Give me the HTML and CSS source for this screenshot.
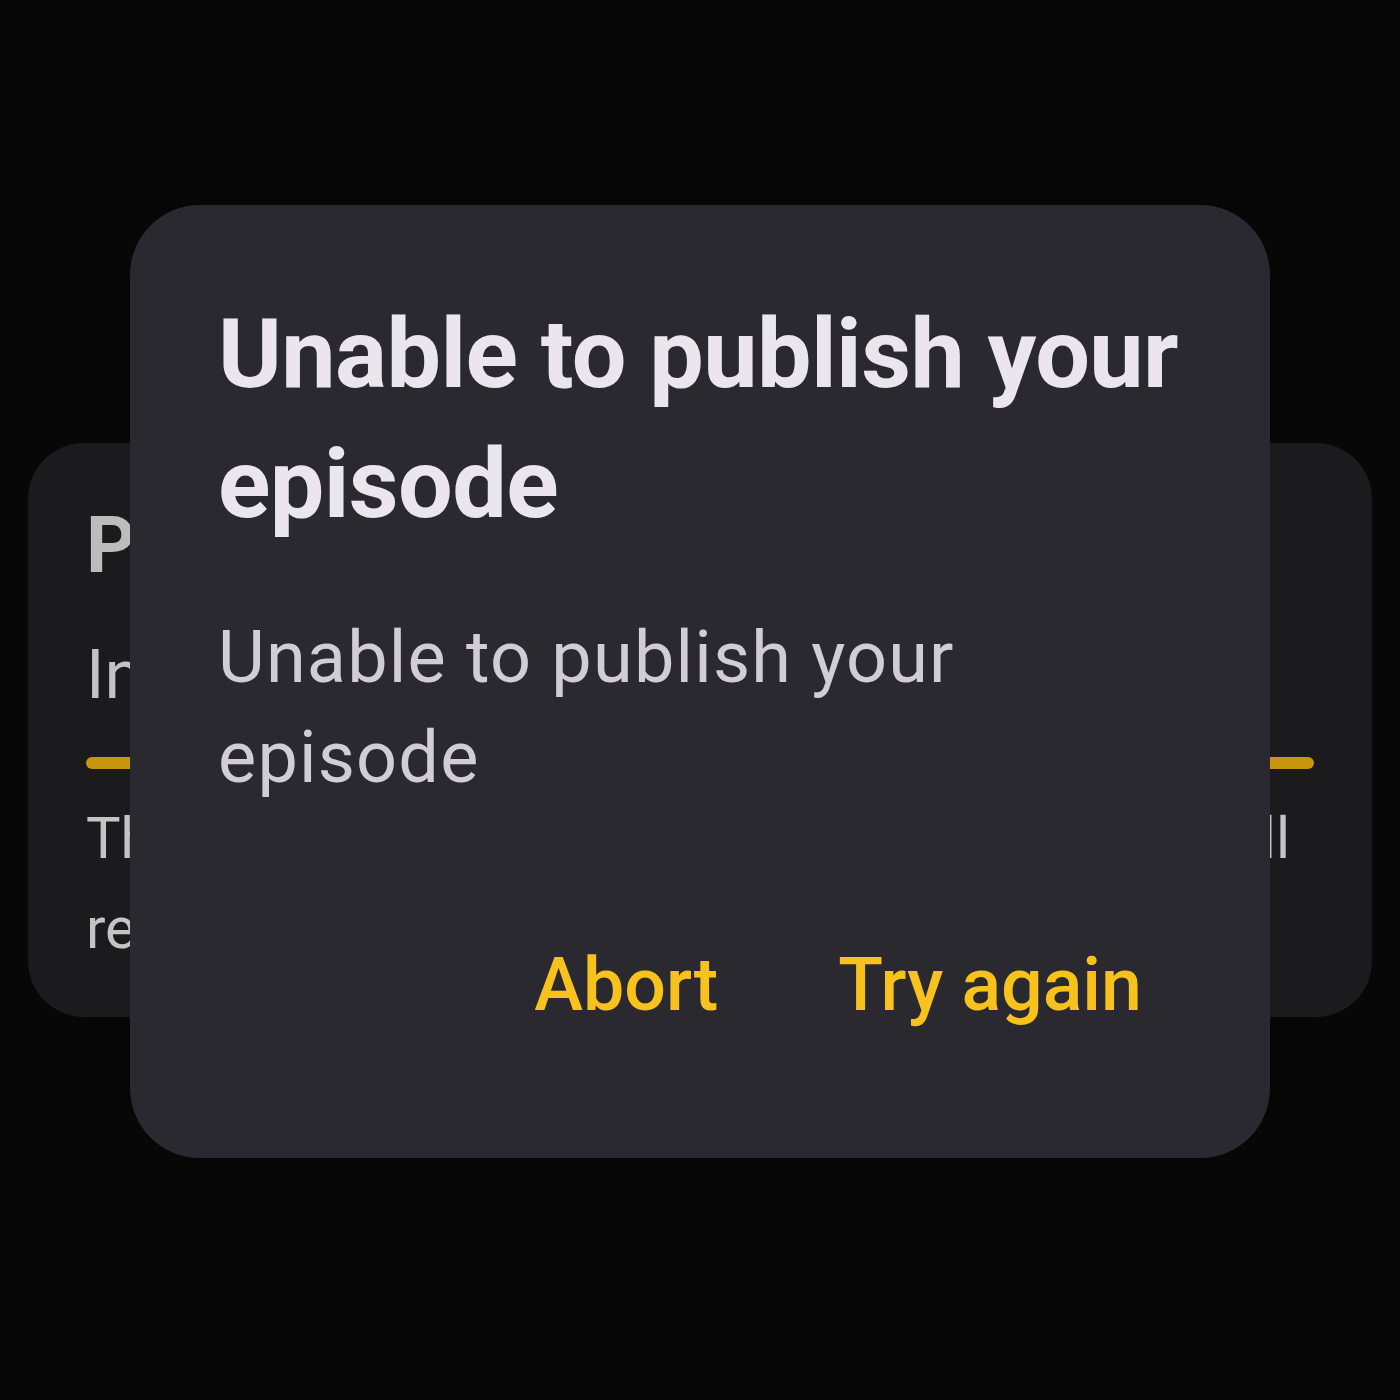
FILE: index.html
```html
<!DOCTYPE html>
<html lang="en">
<head>
<meta charset="utf-8">
<title>Unable to publish your episode</title>
<link rel="stylesheet" href="styles.css">
</head>
<body>
<div class="stage">
  <section class="card">
    <h2 class="card-title">Publishing episode</h2>
    <p class="card-sub">In progress</p>
    <div class="bar"></div>
    <p class="card-text"><span class="line1">This can take a few minutes. We will</span>remind you when it is ready.</p>
  </section>
  <section class="dialog" role="alertdialog">
    <h1 class="dialog-title">Unable to publish your episode</h1>
    <p class="dialog-body">Unable to publish your episode</p>
    <div class="actions">
      <button class="btn">Abort</button>
      <button class="btn">Try again</button>
    </div>
  </section>
</div>
</body>
</html>
```

FILE: styles.css
```css
html, body {
  margin: 0;
  padding: 0;
  background: #070707;
}
body {
  font-family: Roboto, "Noto Sans", Arial, sans-serif;
}
.stage {
  width: 1400px;
  height: 1400px;
  display: grid;
  justify-items: center;
  align-items: start;
  overflow: hidden;
}
.card, .dialog {
  grid-area: 1 / 1;
  box-sizing: border-box;
}
.card {
  margin-top: 443px;
  width: 1344px;
  height: 574px;
  background: #1b1b1d;
  border-radius: 56px;
  padding: 57px 58px 0 58px;
}
.card-title {
  margin: 0;
  font-size: 77px;
  line-height: 92px;
  font-weight: 700;
  color: #bcbcbc;
  white-space: nowrap;
}
.card-sub {
  margin: 42px 0 0;
  font-size: 68px;
  line-height: 82px;
  color: #c2c2c2;
  white-space: nowrap;
}
.bar {
  margin-top: 41px;
  height: 12px;
  border-radius: 6px;
  background: #c8950f;
}
.card-text {
  margin: 24px 0 0;
  font-size: 58px;
  line-height: 90px;
  color: #c4c4c4;
  white-space: nowrap;
}
.line1 {
  display: block;
  text-align: justify;
  text-align-last: justify;
  padding-right: 24px;
}
.dialog {
  margin-top: 205px;
  width: 1140px;
  height: 953px;
  background: #2a2930;
  border-radius: 70px;
  padding: 84px 88px 0 88px;
  display: flex;
  flex-direction: column;
}
.dialog-title {
  margin: 0 -40px 0 0;
  font-size: 97px;
  line-height: 130px;
  font-weight: 700;
  color: #ebe6ee;
  letter-spacing: -0.6px;
}
.dialog-body {
  margin: 59px 0 0;
  font-size: 72px;
  line-height: 100px;
  font-weight: 400;
  color: #d2ccd8;
  letter-spacing: 1.2px;
  padding-right: 120px;
}
.actions {
  margin-top: 112px;
  display: flex;
  justify-content: flex-end;
  gap: 40px;
}
.btn {
  font-family: Roboto, "Noto Sans", Arial, sans-serif;
  font-size: 73.5px;
  line-height: 91px;
  font-weight: 500;
  color: #f7c21b;
  background: transparent;
  border: 0;
  padding: 20px 40px;
  margin: 0;
}
```
